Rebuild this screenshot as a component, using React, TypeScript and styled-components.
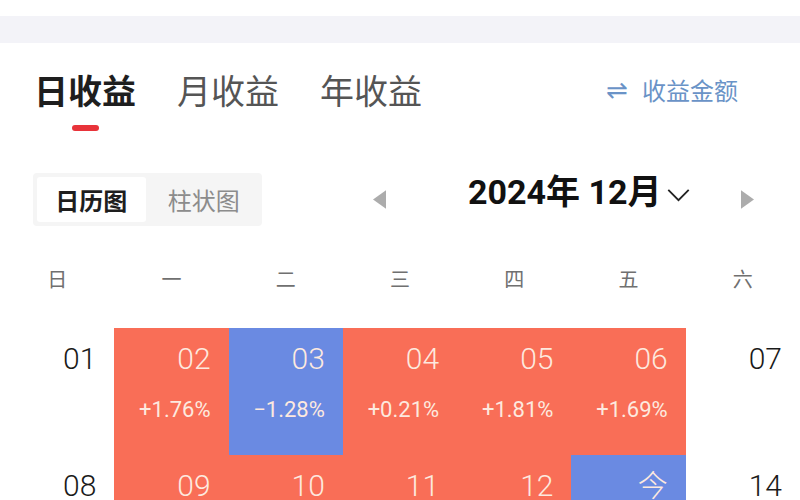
import styled, { createGlobalStyle } from "styled-components";

const GlobalStyle = createGlobalStyle`
  body {
    margin: 0;
    background: #ffffff;
    font-family: "Noto Sans CJK SC", "Noto Sans", sans-serif;
  }
`;

type Tone = "up" | "down" | "none";

interface Day {
  date: string;
  tone: Tone;
  change?: string;
}

const WEEKDAYS = ["日", "一", "二", "三", "四", "五", "六"];

const DAYS: Day[] = [
  { date: "01", tone: "none" },
  { date: "02", tone: "up", change: "+1.76%" },
  { date: "03", tone: "down", change: "\u22121.28%" },
  { date: "04", tone: "up", change: "+0.21%" },
  { date: "05", tone: "up", change: "+1.81%" },
  { date: "06", tone: "up", change: "+1.69%" },
  { date: "07", tone: "none" },
  { date: "08", tone: "none" },
  { date: "09", tone: "up" },
  { date: "10", tone: "up" },
  { date: "11", tone: "up" },
  { date: "12", tone: "up" },
  { date: "今", tone: "down" },
  { date: "14", tone: "none" },
];

const TONE_BG: Record<Tone, string> = {
  up: "#f96e57",
  down: "#6a8ae2",
  none: "transparent",
};

export default function App() {
  return (
    <>
      <GlobalStyle />
      <Page>
        <TopBand />
        <TabBar>
          <Tab>
            <TabLabel active>日收益</TabLabel>
            <TabMark />
          </Tab>
          <Tab>
            <TabLabel>月收益</TabLabel>
          </Tab>
          <Tab>
            <TabLabel>年收益</TabLabel>
          </Tab>
          <SwitchLink>
            <SwapGlyph>⇌</SwapGlyph>
            收益金额
          </SwitchLink>
        </TabBar>

        <Toolbar>
          <Segmented>
            <Segment active>日历图</Segment>
            <Segment>柱状图</Segment>
          </Segmented>
          <MonthNav>
            <Arrow viewBox="0 0 14 20" aria-hidden>
              <path d="M14 0 L0 10 L14 20 Z" />
            </Arrow>
            <MonthTitle>
              2024年 12月
              <Chevron viewBox="0 0 24 14" aria-hidden>
                <path d="M1 1 L12 12 L23 1" />
              </Chevron>
            </MonthTitle>
            <NextArrow viewBox="0 0 14 20" aria-hidden>
              <path d="M0 0 L14 10 L0 20 Z" />
            </NextArrow>
          </MonthNav>
        </Toolbar>

        <WeekRow>
          {WEEKDAYS.map((w) => (
            <WeekDay key={w}>{w}</WeekDay>
          ))}
        </WeekRow>

        <Calendar>
          {DAYS.map((d) => (
            <Cell key={d.date} tone={d.tone}>
              <DateNum tone={d.tone}>{d.date}</DateNum>
              {d.change && <Change>{d.change}</Change>}
            </Cell>
          ))}
        </Calendar>
      </Page>
    </>
  );
}

const Page = styled.div`
  width: 800px;
  height: 500px;
  overflow: hidden;
  padding-top: 16px;
  box-sizing: border-box;
`;

const TopBand = styled.div`
  height: 27px;
  background: #f3f3f8;
`;

const TabBar = styled.div`
  display: flex;
  align-items: flex-start;
  gap: 41px;
  padding: 0 62px 0 34px;
  margin-top: 27px;
`;

const Tab = styled.div`
  display: flex;
  flex-direction: column;
  align-items: center;
`;

const TabLabel = styled.div<{ active?: boolean }>`
  font-size: 34px;
  line-height: 40px;
  font-weight: ${(p) => (p.active ? 700 : 400)};
  color: ${(p) => (p.active ? "#1e1e1e" : "#555555")};
`;

const TabMark = styled.div`
  width: 27px;
  height: 6px;
  border-radius: 3px;
  background: #e8333a;
  margin-top: 15px;
`;

const SwitchLink = styled.div`
  margin-left: auto;
  display: flex;
  align-items: center;
  gap: 14px;
  font-size: 24px;
  line-height: 40px;
  color: #6a93c7;
`;

const SwapGlyph = styled.span`
  font-family: "DejaVu Sans", sans-serif;
  font-size: 26px;
`;

const Toolbar = styled.div`
  display: flex;
  align-items: center;
  margin-top: 41px;
  padding-left: 33px;
`;

const Segmented = styled.div`
  display: flex;
  padding: 4px;
  gap: 4px;
  width: 229px;
  height: 53px;
  box-sizing: border-box;
  background: #f5f5f5;
  border-radius: 4px;
`;

const Segment = styled.div<{ active?: boolean }>`
  width: 110px;
  display: flex;
  align-items: center;
  justify-content: center;
  font-size: 24px;
  font-weight: ${(p) => (p.active ? 700 : 400)};
  color: ${(p) => (p.active ? "#1e1e1e" : "#8c8c8c")};
  background: ${(p) => (p.active ? "#ffffff" : "transparent")};
  border-radius: 3px;
`;

const MonthNav = styled.div`
  flex: 1;
  display: flex;
  align-items: center;
  margin-left: 111px;
  padding-right: 46px;
`;

const Arrow = styled.svg`
  width: 13px;
  height: 19px;
  fill: #acacac;
`;

const NextArrow = styled(Arrow)`
  margin-left: auto;
`;

const MonthTitle = styled.div`
  display: flex;
  align-items: center;
  gap: 5px;
  margin: 0 0 14px 82px;
  font-family: Roboto, "Noto Sans CJK SC", sans-serif;
  font-size: 34px;
  font-weight: 700;
  color: #111111;
  line-height: 40px;
`;

const Chevron = styled.svg`
  width: 23px;
  height: 13px;
  margin-top: 6px;
  fill: none;
  stroke: #222222;
  stroke-width: 2;
`;

const WeekRow = styled.div`
  display: grid;
  grid-template-columns: repeat(7, 1fr);
  margin-top: 38px;
`;

const WeekDay = styled.div`
  text-align: center;
  font-size: 20px;
  line-height: 30px;
  color: #707070;
`;

const Calendar = styled.div`
  display: grid;
  grid-template-columns: repeat(7, 1fr);
  grid-auto-rows: 127px;
  margin-top: 34px;
`;

const Cell = styled.div<{ tone: Tone }>`
  display: flex;
  flex-direction: column;
  align-items: flex-end;
  padding: 14px 18px 0 0;
  background: ${(p) => TONE_BG[p.tone]};
`;

const DateNum = styled.div<{ tone: Tone }>`
  font-family: Roboto, "Noto Sans CJK SC", sans-serif;
  font-size: 30px;
  font-weight: 300;
  line-height: 34px;
  color: ${(p) => (p.tone === "none" ? "#1a1a1a" : "#fde9df")};
`;

const Change = styled.div`
  margin-top: 21px;
  font-family: Roboto, sans-serif;
  font-size: 22px;
  line-height: 26px;
  color: #fde9df;
`;
